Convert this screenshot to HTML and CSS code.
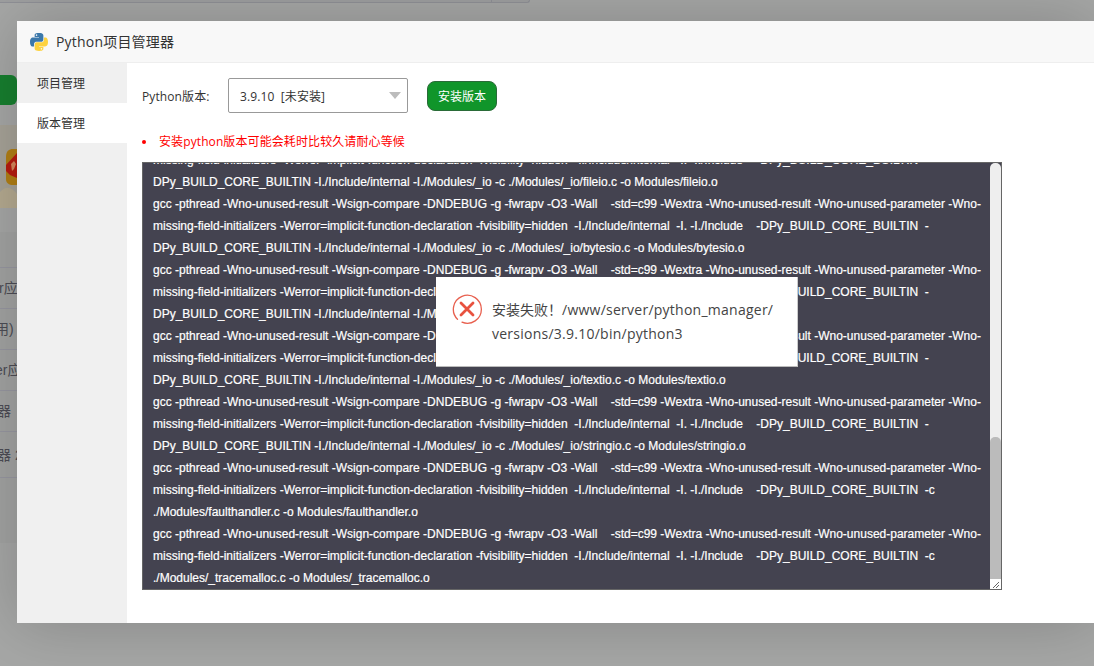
FILE: index.html
```html
<!DOCTYPE html>
<html lang="zh-CN">
<head>
<meta charset="utf-8">
<title>Python项目管理器</title>
<link rel="stylesheet" href="styles.css">
</head>
<body>
<div class="page">
  <div class="topstrip"><span class="topstrip-cell"></span></div>
  <div class="greenbtn"></div>
  <div class="banner">
    <svg class="banner-art" viewBox="0 0 17 83" width="17" height="83" aria-hidden="true">
      <path d="M0 67C6 60 12 62 17 69V83H0Z" fill="#b5aa90"/>
      <path d="M6 32C6 26 9 24 13 24H17V60H13C9 60 6 58 6 54Z" fill="#b27f14"/>
      <path d="M6 40L17 28V53L10 50L6 46Z" fill="#b81c10"/>
      <path d="M11 39L14 36L16 39L14 44L12 46Z" fill="#d8885c"/>
    </svg>
  </div>
  <div class="rows">
    <div class="row-head"></div>
    <div class="row row-a">r应用</div>
    <div class="row row-b">用)</div>
    <div class="row row-c">er应用</div>
    <div class="row row-d">器</div>
    <div class="row row-e">器 2</div>
  </div>
</div>

<div class="modal">
  <header class="modal-head">
    <svg class="logo" viewBox="0 0 24 24" width="18" height="18" aria-hidden="true">
      <path class="logo-blue" fill-rule="evenodd" d="M11.9 0C5.8 0 6.2 2.6 6.2 2.6v2.7h5.8v.8H3.9S0 5.7 0 11.9c0 6.2 3.4 6 3.4 6h2v-2.9s-.1-3.4 3.4-3.4h5.8s3.2.1 3.2-3.1V3.2S18.3 0 11.9 0zM8.7 1.8a1 1 0 1 1 0 2.1 1 1 0 0 1 0-2.1z"/>
      <path class="logo-yellow" fill-rule="evenodd" transform="rotate(180 12 12)" d="M11.9 0C5.8 0 6.2 2.6 6.2 2.6v2.7h5.8v.8H3.9S0 5.7 0 11.9c0 6.2 3.4 6 3.4 6h2v-2.9s-.1-3.4 3.4-3.4h5.8s3.2.1 3.2-3.1V3.2S18.3 0 11.9 0zM8.7 1.8a1 1 0 1 1 0 2.1 1 1 0 0 1 0-2.1z"/>
    </svg>
    <h1 class="modal-title">Python项目管理器</h1>
  </header>
  <div class="modal-body">
    <nav class="side">
      <div class="tab">项目管理</div>
      <div class="tab tab-active">版本管理</div>
    </nav>
    <main class="content">
      <div class="form-line">
        <span class="form-label">Python版本:</span>
        <div class="select"><span class="select-value">3.9.10&nbsp; [未安装]</span><span class="caret"></span></div>
        <button class="install" type="button">安装版本</button>
      </div>
      <ul class="tips"><li class="tip">安装python版本可能会耗时比较久请耐心等候</li></ul>
      <div class="log">
        <pre class="log-text">missing-field-initializers -Werror=implicit-function-declaration -fvisibility=hidden  -I./Include/internal  -I. -I./Include    -DPy_BUILD_CORE_BUILTIN  -
DPy_BUILD_CORE_BUILTIN -I./Include/internal -I./Modules/_io -c ./Modules/_io/fileio.c -o Modules/fileio.o
gcc -pthread -Wno-unused-result -Wsign-compare -DNDEBUG -g -fwrapv -O3 -Wall    -std=c99 -Wextra -Wno-unused-result -Wno-unused-parameter -Wno-
missing-field-initializers -Werror=implicit-function-declaration -fvisibility=hidden  -I./Include/internal  -I. -I./Include    -DPy_BUILD_CORE_BUILTIN  -
DPy_BUILD_CORE_BUILTIN -I./Include/internal -I./Modules/_io -c ./Modules/_io/bytesio.c -o Modules/bytesio.o
gcc -pthread -Wno-unused-result -Wsign-compare -DNDEBUG -g -fwrapv -O3 -Wall    -std=c99 -Wextra -Wno-unused-result -Wno-unused-parameter -Wno-
missing-field-initializers -Werror=implicit-function-declaration -fvisibility=hidden  -I./Include/internal  -I. -I./Include    -DPy_BUILD_CORE_BUILTIN  -
DPy_BUILD_CORE_BUILTIN -I./Include/internal -I./Modules/_io -c ./Modules/_io/bufferedio.c -o Modules/bufferedio.o
gcc -pthread -Wno-unused-result -Wsign-compare -DNDEBUG -g -fwrapv -O3 -Wall    -std=c99 -Wextra -Wno-unused-result -Wno-unused-parameter -Wno-
missing-field-initializers -Werror=implicit-function-declaration -fvisibility=hidden  -I./Include/internal  -I. -I./Include    -DPy_BUILD_CORE_BUILTIN  -
DPy_BUILD_CORE_BUILTIN -I./Include/internal -I./Modules/_io -c ./Modules/_io/textio.c -o Modules/textio.o
gcc -pthread -Wno-unused-result -Wsign-compare -DNDEBUG -g -fwrapv -O3 -Wall    -std=c99 -Wextra -Wno-unused-result -Wno-unused-parameter -Wno-
missing-field-initializers -Werror=implicit-function-declaration -fvisibility=hidden  -I./Include/internal  -I. -I./Include    -DPy_BUILD_CORE_BUILTIN  -
DPy_BUILD_CORE_BUILTIN -I./Include/internal -I./Modules/_io -c ./Modules/_io/stringio.c -o Modules/stringio.o
gcc -pthread -Wno-unused-result -Wsign-compare -DNDEBUG -g -fwrapv -O3 -Wall    -std=c99 -Wextra -Wno-unused-result -Wno-unused-parameter -Wno-
missing-field-initializers -Werror=implicit-function-declaration -fvisibility=hidden  -I./Include/internal  -I. -I./Include    -DPy_BUILD_CORE_BUILTIN  -c
./Modules/faulthandler.c -o Modules/faulthandler.o
gcc -pthread -Wno-unused-result -Wsign-compare -DNDEBUG -g -fwrapv -O3 -Wall    -std=c99 -Wextra -Wno-unused-result -Wno-unused-parameter -Wno-
missing-field-initializers -Werror=implicit-function-declaration -fvisibility=hidden  -I./Include/internal  -I. -I./Include    -DPy_BUILD_CORE_BUILTIN  -c
./Modules/_tracemalloc.c -o Modules/_tracemalloc.o</pre>
        <div class="scrollbar">
          <div class="scroll-track"><div class="scroll-thumb"></div></div>
          <div class="scroll-corner">
            <svg viewBox="0 0 10 10" width="10" height="10" aria-hidden="true"><path d="M3 9L9 3M6 9L9 6" stroke="#666" stroke-width="1" fill="none"/></svg>
          </div>
        </div>
      </div>
    </main>
  </div>
</div>

<div class="toast">
  <svg class="toast-icon" viewBox="0 0 32 32" width="32" height="32" aria-hidden="true">
    <path d="M6.5 26.2A14 14 0 1 1 11 29.2" fill="none" stroke="#e8604f" stroke-width="1.3" stroke-linecap="round"/>
    <path d="M10 10L22 22M22 10L10 22" fill="none" stroke="#e8523f" stroke-width="2.8" stroke-linecap="round"/>
  </svg>
  <p class="toast-text">安装失败！<span class="toast-path">/www/server/python_manager/<br>versions/3.9.10/bin/python3</span></p>
</div>
</body>
</html>
```

FILE: styles.css
```css
* { box-sizing: border-box; }
html, body { margin: 0; padding: 0; height: 100%; overflow: hidden; }
body {
  position: relative;
  width: 1094px;
  height: 666px;
  background: #a6a7a6;
  font-family: "Open Sans", "Noto Sans CJK SC", sans-serif;
  font-size: 12px;
  color: #333;
}

/* dimmed page behind the dialog */
.page { display: flex; flex-direction: column; height: 666px; }
.topstrip {
  display: flex;
  justify-content: flex-end;
  width: 530px;
  height: 3px;
  background: #9e9fa0;
  border-bottom: 1px solid #8f9096;
  border-right: 1px solid #8f9096;
  border-bottom-right-radius: 4px;
}
.topstrip-cell { width: 38px; border-left: 1px solid #8f9096; }
.greenbtn {
  width: 17px;
  height: 30px;
  margin-top: 72px;
  background: #177f2f;
  border-radius: 0 6px 6px 0;
}
.banner {
  width: 100%;
  height: 83px;
  margin-top: 20px;
  background: #a7a398;
}
.banner-art { display: block; }
.rows {
  margin-top: 24px;
  height: 311px;
  background: #a2a3a2;
  color: #4d4d55;
  font-family: "Liberation Sans", "Noto Sans CJK SC", sans-serif;
  font-size: 14px;
  white-space: nowrap;
  overflow: hidden;
}
.row-head { height: 36px; border-bottom: 1px solid #9797a0; }
.row { height: 41px; line-height: 40px; border-bottom: 1px solid #9797a0; }
.row-a { text-indent: -1px; }
.row-b { text-indent: -5px; }
.row-c { text-indent: -5px; }
.row-d { text-indent: -3px; }
.row-e { height: 46px; line-height: 47px; text-indent: -3px; }

/* dialog */
.modal {
  position: absolute;
  left: 17px;
  top: 21px;
  width: 1077px;
  height: 602px;
  display: flex;
  flex-direction: column;
  background: #fff;
  box-shadow: 0 0 60px rgba(0, 0, 0, .2);
}
.modal-head {
  display: flex;
  align-items: center;
  gap: 8px;
  height: 42px;
  padding-left: 13px;
  background: #f8f8f8;
  border-bottom: 1px solid #eee;
  flex: none;
}
.logo { flex: none; }
.logo-blue { fill: #3c78aa; }
.logo-yellow { fill: #fdd23e; }
.modal-title { margin: 0 0 2px; font-size: 14px; font-weight: 400; letter-spacing: .2px; color: #333; }
.modal-body { display: flex; flex: 1; min-height: 0; }
.side { width: 110px; flex: none; background: #f0f0f0; }
.tab { height: 40px; padding: 1px 0 0 20px; line-height: 40px; font-size: 12px; color: #333; }
.tab-active { background: #fff; }
.content { flex: 1; min-width: 0; padding: 15px 0 0 15px; }
.form-line { display: flex; align-items: center; height: 35px; letter-spacing: .1px; }
.form-label { width: 86px; flex: none; color: #333; }
.select {
  display: flex;
  align-items: center;
  justify-content: space-between;
  width: 180px;
  height: 35px;
  padding: 0 6px 0 11px;
  background: #fff;
  border: 1px solid #999;
  border-radius: 2px;
  color: #333;
}
.caret {
  width: 0;
  height: 0;
  border-left: 6px solid transparent;
  border-right: 6px solid transparent;
  border-top: 7px solid #bcbcbc;
}
.install {
  width: 70px;
  height: 30px;
  margin-left: 19px;
  padding: 0;
  background: #10952a;
  border: 1px solid #2a6b38;
  border-radius: 8px;
  color: #fff;
  font: inherit;
  letter-spacing: 0;
}
.tips { margin: 22px 0 0; padding: 0; list-style: none; height: 14px; line-height: 14px; color: #f00; letter-spacing: .1px; }
.tip { display: flex; align-items: center; gap: 13px; }
.tip::before { content: ""; width: 4px; height: 4px; border-radius: 50%; background: #f00; flex: none; }
.log {
  display: flex;
  width: 860px;
  height: 428px;
  margin-top: 13px;
  background: #444350;
  border: 1px solid #666;
  overflow: hidden;
}
.log-text {
  flex: 1;
  min-width: 0;
  margin: -14px 0 0;
  padding: 0 0 0 10px;
  font-family: "Liberation Sans", sans-serif;
  font-size: 12px;
  line-height: 22px;
  color: #fff;
  white-space: pre;
  overflow: hidden;
  -webkit-text-stroke: .2px #fff;
}
.scrollbar { display: flex; flex-direction: column; width: 11px; flex: none; }
.scroll-track { flex: 1; display: flex; flex-direction: column; justify-content: flex-end; background: #eee; border-radius: 5px 5px 0 0; }
.scroll-thumb { height: 142px; background: #bbb; border-radius: 5px 5px 0 0; }
.scroll-corner { height: 10px; background: #fff; flex: none; }
.scroll-corner svg { display: block; }

/* error toast */
.toast {
  position: absolute;
  left: 436px;
  top: 277px;
  width: 362px;
  height: 90px;
  display: flex;
  align-items: flex-start;
  gap: 9px;
  padding: 16px 0 0 15px;
  background: #fff;
  border-bottom: 1px solid #bbb;
  border-right: 1px solid #ccc;
}
.toast-icon { flex: none; }
.toast-text {
  margin: 5px 0 0;
  font-size: 14px;
  line-height: 24px;
  color: #444;
  white-space: nowrap;
}
.toast-path { letter-spacing: .25px; }
```
